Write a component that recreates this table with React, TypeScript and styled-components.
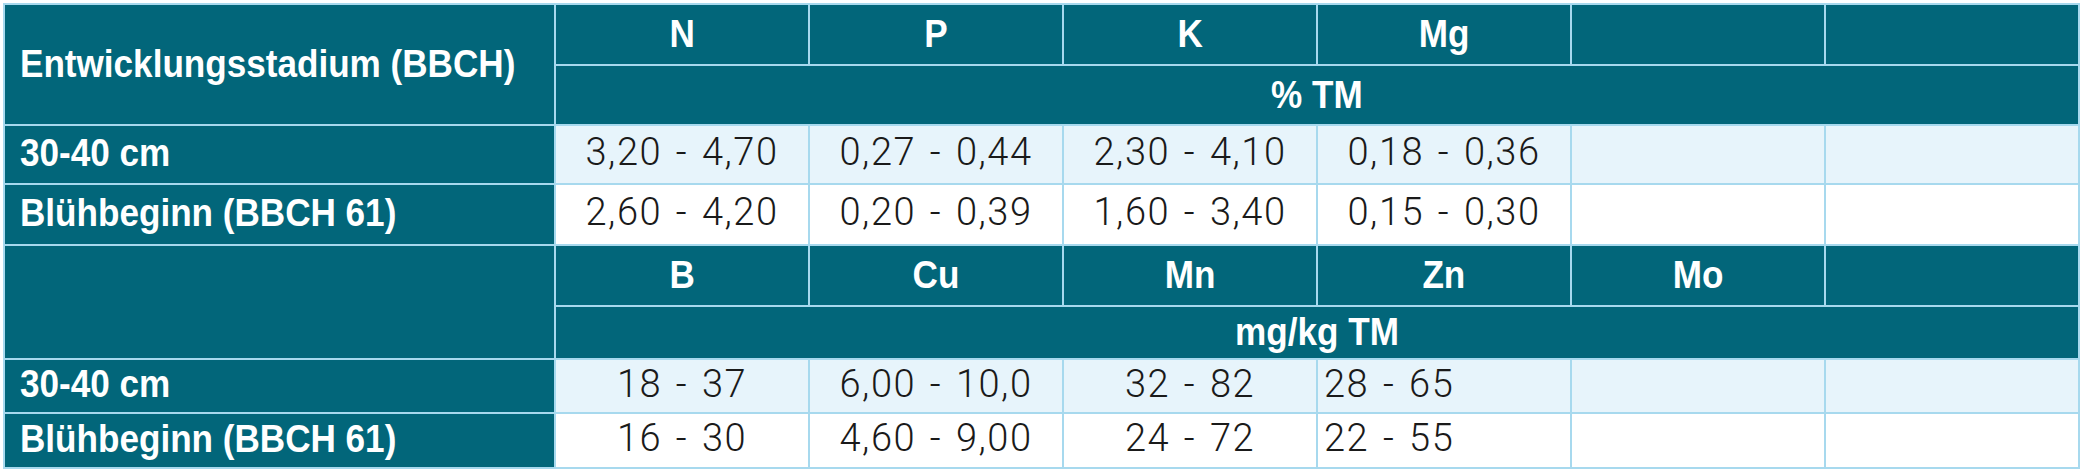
import React from "react";
import styled, { createGlobalStyle } from "styled-components";

const Global = createGlobalStyle`
  html, body { margin: 0; padding: 0; background: #ffffff; }
`;

const TEAL = "#02667a";
const LINE = "#a7d9ee";

const Wrap = styled.div`
  padding: 3px;
`;

const Table = styled.table`
  width: 2075px;
  table-layout: fixed;
  border-collapse: collapse;
  border: 2px solid ${LINE};
`;

const HeadRow = styled.tr<{ $h: number }>`
  height: ${(p) => p.$h}px;
  background: ${TEAL};
`;

const DataRow = styled.tr<{ $h: number; $tint?: boolean }>`
  height: ${(p) => p.$h}px;
  background: ${(p) => (p.$tint ? "#e7f4fb" : "#ffffff")};
`;

const HeadCell = styled.th<{ $align?: "left" | "center" }>`
  border: 2px solid ${LINE};
  background: ${TEAL};
  color: #ffffff;
  font-family: "Liberation Sans", Arial, sans-serif;
  font-weight: 700;
  font-size: 39px;
  line-height: 1;
  text-align: ${(p) => p.$align ?? "center"};
  padding: 0 0 2px ${(p) => (p.$align === "left" ? "15px" : "0")};
  vertical-align: middle;
  white-space: nowrap;
  overflow: visible;
`;

const StageCell = styled.th`
  border: 2px solid ${LINE};
  background: ${TEAL};
  color: #ffffff;
  font-family: "Liberation Sans", Arial, sans-serif;
  font-weight: 700;
  font-size: 39px;
  line-height: 1;
  text-align: left;
  padding: 0 0 5px 15px;
  vertical-align: middle;
  white-space: nowrap;
`;

const Narrow = styled.span<{ $origin?: "left" | "center" }>`
  display: inline-block;
  transform: scaleX(0.9);
  transform-origin: ${(p) => (p.$origin === "left" ? "left center" : "center center")};
`;

const ValueCell = styled.td<{ $align?: "left" | "center" }>`
  border: 2px solid ${LINE};
  color: #1a1a1a;
  font-family: Roboto, "Liberation Sans", Arial, sans-serif;
  font-weight: 300;
  font-size: 38px;
  letter-spacing: 1.5px;
  word-spacing: 3px;
  line-height: 1;
  text-align: ${(p) => p.$align ?? "center"};
  padding: 0 0 5px ${(p) => (p.$align === "left" ? "6px" : "0")};
  vertical-align: middle;
  white-space: nowrap;
`;

type Block = {
  elements: string[];
  unit: string;
  rows: { stage: string; values: string[] }[];
  leftCols?: number[];
  heights: number[];
};

const blocks: Block[] = [
  {
    elements: ["N", "P", "K", "Mg", "", ""],
    unit: "% TM",
    rows: [
      { stage: "30-40 cm", values: ["3,20 - 4,70", "0,27 - 0,44", "2,30 - 4,10", "0,18 - 0,36", "", ""] },
      { stage: "Blühbeginn (BBCH 61)", values: ["2,60 - 4,20", "0,20 - 0,39", "1,60 - 3,40", "0,15 - 0,30", "", ""] },
    ],
    heights: [61, 60, 59, 61],
  },
  {
    elements: ["B", "Cu", "Mn", "Zn", "Mo", ""],
    unit: "mg/kg TM",
    rows: [
      { stage: "30-40 cm", values: ["18 - 37", "6,00 - 10,0", "32 - 82", "28 - 65", "", ""] },
      { stage: "Blühbeginn (BBCH 61)", values: ["16 - 30", "4,60 - 9,00", "24 - 72", "22 - 55", "", ""] },
    ],
    leftCols: [3],
    heights: [61, 53, 54, 55],
  },
];

export default function App() {
  return (
    <>
      <Global />
      <Wrap>
        <Table>
          <colgroup>
            <col style={{ width: 551 }} />
            {Array.from({ length: 6 }).map((_, i) => (
              <col key={i} style={{ width: 254 }} />
            ))}
          </colgroup>
          <tbody>
            {blocks.map((b, bi) => (
              <React.Fragment key={bi}>
                <HeadRow $h={b.heights[0]}>
                  <HeadCell rowSpan={2} $align="left">
                    {bi === 0 && <Narrow $origin="left">Entwicklungsstadium (BBCH)</Narrow>}
                  </HeadCell>
                  {b.elements.map((e, i) => (
                    <HeadCell key={i}>{e && <Narrow>{e}</Narrow>}</HeadCell>
                  ))}
                </HeadRow>
                <HeadRow $h={b.heights[1]}>
                  <HeadCell colSpan={6}>
                    <Narrow>{b.unit}</Narrow>
                  </HeadCell>
                </HeadRow>
                {b.rows.map((r, ri) => (
                  <DataRow key={ri} $h={b.heights[2 + ri]} $tint={ri === 0}>
                    <StageCell>
                      <Narrow $origin="left">{r.stage}</Narrow>
                    </StageCell>
                    {r.values.map((v, vi) => (
                      <ValueCell key={vi} $align={b.leftCols?.includes(vi) ? "left" : "center"}>
                        {v}
                      </ValueCell>
                    ))}
                  </DataRow>
                ))}
              </React.Fragment>
            ))}
          </tbody>
        </Table>
      </Wrap>
    </>
  );
}
